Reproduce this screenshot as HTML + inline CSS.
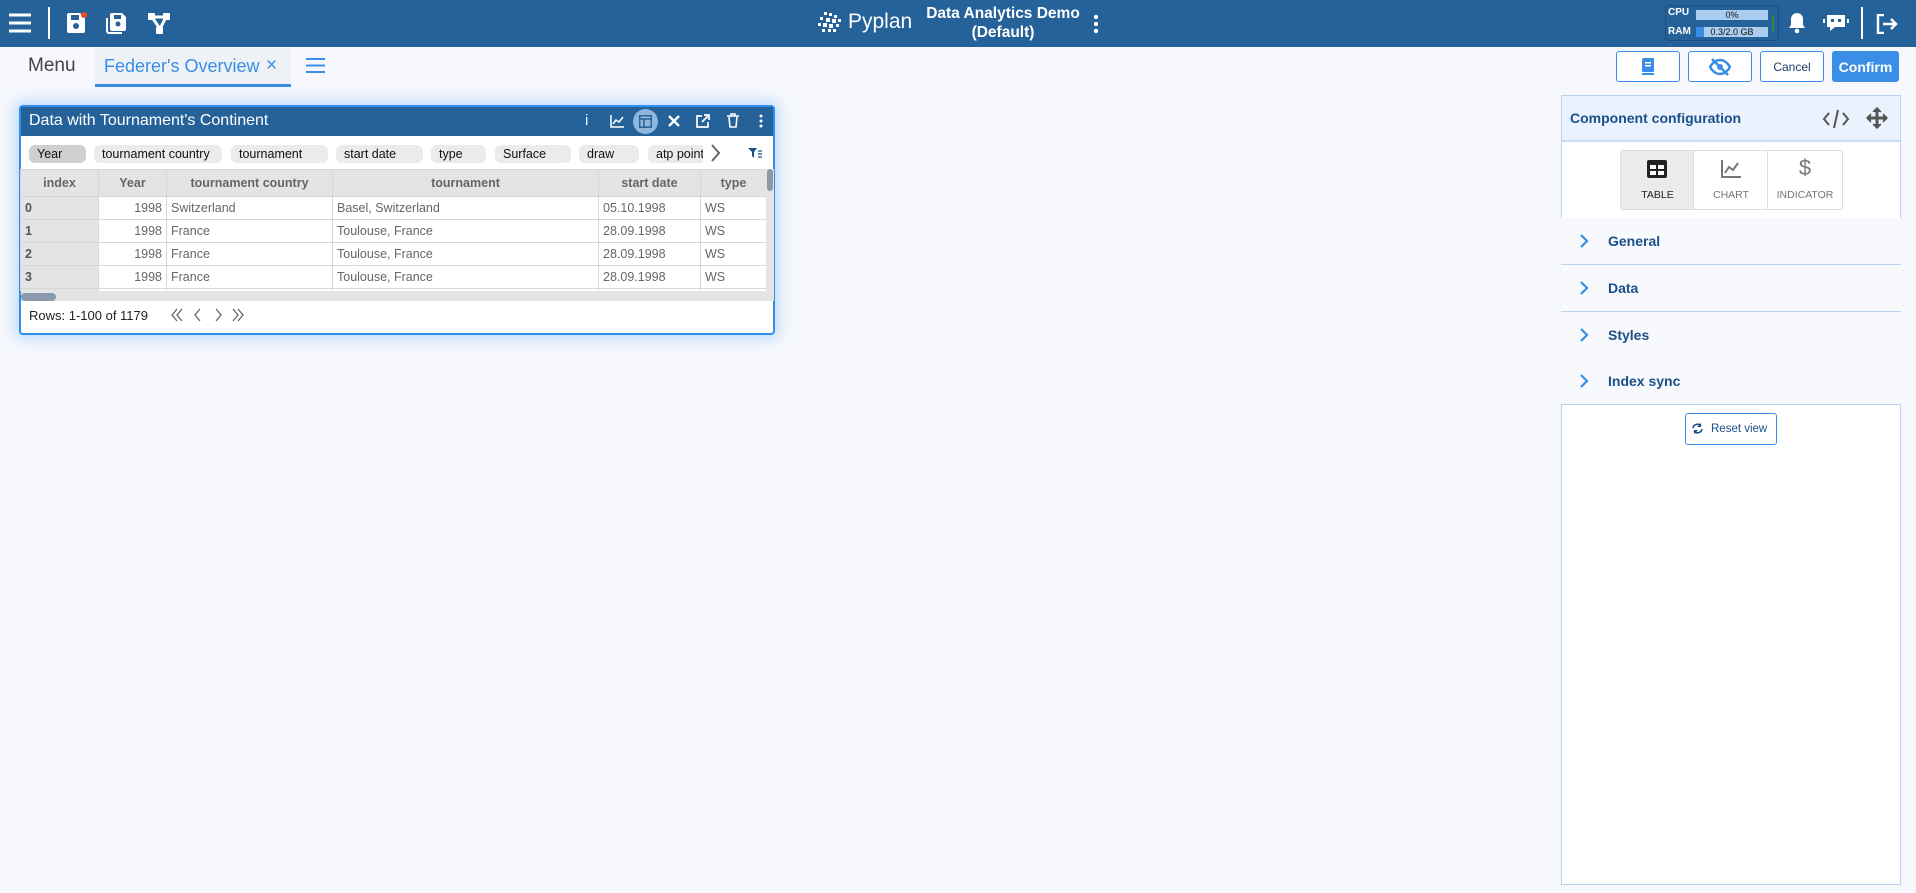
<!DOCTYPE html>
<html><head><meta charset="utf-8"><style>
*{box-sizing:border-box;margin:0;padding:0}
body{width:1916px;height:893px;background:#f6f8fd;font-family:"Liberation Sans",Arial,sans-serif;position:relative;overflow:hidden}
.abs{position:absolute}
.top{left:0;top:0;width:1916px;height:47px;background:#25629a}
.w{color:#fff}
.btn{position:absolute;top:51px;height:31px;border:1px solid #3a8ee6;border-radius:3px;background:#fff;display:flex;align-items:center;justify-content:center;font-size:12px;color:#1b3c66}
.chip{position:absolute;top:145px;height:18px;background:#ebebeb;border-radius:6px;font-size:12.5px;line-height:18px;padding-left:8px;color:#111;overflow:hidden;white-space:nowrap}
table{border-collapse:collapse;position:absolute;left:0;top:0;font-size:12.5px;table-layout:fixed}
td,th{border:1px solid #d6d6d6;height:23px;padding:0 4px;white-space:nowrap;overflow:hidden;color:#666;font-weight:normal}
th{background:#e4e4e4;height:27px;font-weight:bold;color:#666;text-align:center}
td.i{background:#e4e4e4;color:#555;font-weight:bold}
.row{position:absolute;left:1561px;width:340px;height:47px;border-bottom:1px solid #b9d3ee;font-size:14px;font-weight:bold;color:#1b4f8a}
.row span{position:absolute;left:47px;top:15px}
.row svg{position:absolute;left:18px;top:15px}
</style></head><body>
<div class="abs top"></div>
<svg class="abs" style="left:9px;top:13px" width="22" height="20"><g stroke="#fff" stroke-width="3"><line x1="0" y1="2" x2="22" y2="2"/><line x1="0" y1="10" x2="22" y2="10"/><line x1="0" y1="18" x2="22" y2="18"/></g></svg>
<div class="abs" style="left:48px;top:7px;width:2px;height:32px;background:#fff"></div>
<svg class="abs" style="left:66px;top:12px" width="22" height="22"><path d="M1 3a2 2 0 0 1 2-2h11l5 5v13a2 2 0 0 1-2 2H3a2 2 0 0 1-2-2z" fill="#fff"/><rect x="5" y="3" width="8" height="5" fill="#25629a"/><circle cx="10" cy="14" r="3" fill="#25629a"/><circle cx="18" cy="3" r="3" fill="#f04a2a"/></svg>
<svg class="abs" style="left:106px;top:12px" width="22" height="22"><path d="M4 3a2 2 0 0 1 2-2h10l4 4v12a2 2 0 0 1-2 2H6a2 2 0 0 1-2-2z" fill="#fff"/><path d="M1 6v13a2 2 0 0 0 2 2h13" stroke="#fff" stroke-width="2" fill="none"/><rect x="8" y="3" width="7" height="4" fill="#25629a"/><circle cx="12" cy="12" r="2.5" fill="#25629a"/></svg>
<svg class="abs" style="left:148px;top:13px" width="24" height="22"><g fill="#fff"><rect x="0" y="0" width="7" height="7" rx="1"/><rect x="15" y="0" width="7" height="7" rx="1"/><rect x="8" y="14" width="7" height="7" rx="1"/></g><path d="M4 4h14M4 4l8 12M18 4l-6 12" stroke="#fff" stroke-width="3" fill="none"/></svg>
<svg class="abs" style="left:818px;top:11px" width="26" height="22"><g fill="#fff"><rect x="6" y="1" width="3" height="3"/><rect x="11" y="2" width="3" height="3"/><rect x="16" y="4" width="3" height="3"/><rect x="2" y="6" width="3" height="3"/><rect x="8" y="7" width="4" height="4"/><rect x="14" y="8" width="4" height="4"/><rect x="20" y="8" width="3" height="3"/><rect x="0" y="12" width="3" height="3"/><rect x="5" y="12" width="4" height="4"/><rect x="11" y="13" width="4" height="4"/><rect x="18" y="13" width="3" height="3"/><rect x="4" y="18" width="3" height="3"/><rect x="10" y="18" width="3" height="3"/><rect x="15" y="18" width="3" height="3"/></g></svg>
<div class="abs w" style="left:848px;top:10px;font-size:21px">Pyplan</div>
<div class="abs w" style="left:920px;top:4px;width:166px;text-align:center;font-size:15.5px;font-weight:bold;line-height:19px">Data Analytics Demo<br>(Default)</div>
<svg class="abs" style="left:1093px;top:14px" width="6" height="20"><g fill="#fff"><circle cx="3" cy="3" r="2.2"/><circle cx="3" cy="10" r="2.2"/><circle cx="3" cy="17" r="2.2"/></g></svg>
<div class="abs" style="left:1665px;top:5px;width:114px;height:36px;border:1px solid #1d4f80;border-radius:4px"></div>
<div class="abs w" style="left:1668px;top:7px;font-size:10px;font-weight:bold">CPU</div>
<div class="abs w" style="left:1668px;top:26px;font-size:10px;font-weight:bold">RAM</div>
<div class="abs" style="left:1696px;top:10px;width:72px;height:10px;background:#a9cdf1;font-size:9px;text-align:center;line-height:10px;color:#111">0%</div>
<div class="abs" style="left:1696px;top:27px;width:72px;height:10px;background:#a9cdf1;font-size:9px;text-align:center;line-height:10px;color:#111"><div class="abs" style="left:0;top:0;width:8px;height:10px;background:#3a8ee6"></div><span style="position:relative">0.3/2.0 GB</span></div>
<div class="abs" style="left:1772px;top:15px;width:2px;height:16px;background:#2f8a3a"></div>
<svg class="abs" style="left:1788px;top:12px" width="18" height="22"><path d="M9 1a6 6 0 0 0-6 6v6l-2 3h16l-2-3V7a6 6 0 0 0-6-6z" fill="#fff"/><circle cx="9" cy="19" r="2.3" fill="#fff"/></svg>
<svg class="abs" style="left:1823px;top:11px" width="26" height="24"><path d="M4 4h18v12h-10l-5 4v-4H4z" fill="#fff"/><rect x="8" y="8" width="3" height="3" fill="#25629a"/><rect x="15" y="8" width="3" height="3" fill="#25629a"/><path d="M1 8v4M25 8v4" stroke="#fff" stroke-width="2"/></svg>
<div class="abs" style="left:1861px;top:7px;width:2px;height:32px;background:#fff"></div>
<svg class="abs" style="left:1876px;top:14px" width="22" height="20"><path d="M8 1H2v18h6" stroke="#fff" stroke-width="2.4" fill="none"/><path d="M7 10h13M15 5l5 5-5 5" stroke="#fff" stroke-width="2.4" fill="none"/></svg>

<div class="abs" style="left:28px;top:55px;font-size:19px;color:#444">Menu</div>
<div class="abs" style="left:95px;top:48px;width:196px;height:39px;background:#eef1f6;border-bottom:3px solid #3a8ee6"></div>
<div class="abs" style="left:104px;top:56px;font-size:18px;color:#3a8ee6">Federer's Overview</div>
<div class="abs" style="left:266px;top:55px;font-size:19px;color:#3a8ee6">×</div>
<svg class="abs" style="left:306px;top:57px" width="19" height="17"><g stroke="#3a8ee6" stroke-width="2"><line x1="0" y1="2" x2="19" y2="2"/><line x1="0" y1="8.5" x2="19" y2="8.5"/><line x1="0" y1="15" x2="19" y2="15"/></g></svg>

<div class="btn" style="left:1616px;width:64px"><svg width="14" height="18"><path d="M1 2a2 2 0 0 1 2-2h10v14H3" fill="#3a8ee6"/><rect x="1" y="2" width="12" height="12" fill="#3a8ee6"/><rect x="4" y="4" width="6" height="1.5" fill="#fff"/><rect x="4" y="7" width="6" height="1.5" fill="#fff"/><rect x="1" y="15" width="12" height="2" fill="#3a8ee6"/></svg></div>
<div class="btn" style="left:1688px;width:64px"><svg width="22" height="18"><path d="M1 9c3-5 6-7 10-7s7 2 10 7c-3 5-6 7-10 7S4 14 1 9z" stroke="#3a8ee6" stroke-width="2.5" fill="none"/><circle cx="11" cy="9" r="3" fill="#3a8ee6"/><line x1="3" y1="1" x2="19" y2="17" stroke="#3a8ee6" stroke-width="2.5"/></svg></div>
<div class="btn" style="left:1760px;width:64px">Cancel</div>
<div class="btn" style="left:1832px;width:67px;background:#3a8ee6;color:#fff;font-size:14px;font-weight:bold">Confirm</div>

<div class="abs" style="left:19px;top:105px;width:756px;height:230px;background:#fff;border:2px solid #2d8ff0;border-radius:4px;box-shadow:0 0 14px 4px rgba(90,160,240,.35)"></div>
<div class="abs" style="left:21px;top:107px;width:752px;height:29px;background:#25629a"></div>
<div class="abs w" style="left:29px;top:112px;font-size:16px">Data with Tournament's Continent</div>
<div class="abs w" style="left:585px;top:112px;font-size:15px">i</div>
<svg class="abs" style="left:610px;top:115px" width="14" height="13"><path d="M1 0v12h13M3 9l3-4 3 2 4-5" stroke="#fff" stroke-width="1.5" fill="none"/></svg>
<div class="abs" style="left:633px;top:109px;width:25px;height:25px;border-radius:50%;background:#8fb6dc"></div>
<svg class="abs" style="left:639px;top:115px" width="13" height="13"><rect x="0.7" y="0.7" width="11.5" height="11.5" stroke="#25629a" stroke-width="1.5" fill="none"/><path d="M1 4h11M5 4v8" stroke="#25629a" stroke-width="1.5"/></svg>
<svg class="abs" style="left:667px;top:114px" width="14" height="14"><path d="M2 2l10 10M12 2L2 12" stroke="#fff" stroke-width="2.4"/></svg>
<svg class="abs" style="left:696px;top:114px" width="14" height="14"><path d="M6 2H1v11h11V8M8 1h5v5M13 1L6 8" stroke="#fff" stroke-width="1.7" fill="none"/></svg>
<svg class="abs" style="left:727px;top:113px" width="12" height="15"><path d="M0 3h12M4 3V1h4v2M2 4l1 10h6l1-10" stroke="#fff" stroke-width="1.6" fill="none"/></svg>
<svg class="abs" style="left:759px;top:114px" width="4" height="14"><g fill="#fff"><circle cx="2" cy="2" r="1.5"/><circle cx="2" cy="7" r="1.5"/><circle cx="2" cy="12" r="1.5"/></g></svg>

<div class="chip" style="left:29px;width:57px;background:#cfcfcf">Year</div>
<div class="chip" style="left:94px;width:128px">tournament country</div>
<div class="chip" style="left:231px;width:97px">tournament</div>
<div class="chip" style="left:336px;width:87px">start date</div>
<div class="chip" style="left:431px;width:55px">type</div>
<div class="chip" style="left:495px;width:76px">Surface</div>
<div class="chip" style="left:579px;width:60px">draw</div>
<div class="chip" style="left:648px;width:55px;border-radius:6px 0 0 6px">atp points</div>
<svg class="abs" style="left:710px;top:144px" width="10" height="18"><path d="M2 1l7 8-7 8" stroke="#666" stroke-width="2" fill="none"/></svg>
<svg class="abs" style="left:748px;top:148px" width="14" height="11"><path d="M0 0h9L6 4v6L4 8V4z" fill="#1b4f8a"/><path d="M10 3h4M10 6h4M10 9h4" stroke="#1b4f8a" stroke-width="1.3"/></svg>

<div class="abs" style="left:20px;top:169px;width:746px;height:122px;overflow:hidden">
<table style="width:746px">
<colgroup><col style="width:78px"><col style="width:68px"><col style="width:166px"><col style="width:266px"><col style="width:102px"><col style="width:66px"></colgroup>
<tr><th>index</th><th>Year</th><th>tournament country</th><th>tournament</th><th>start date</th><th>type</th></tr>
<tr><td class="i">0</td><td style="text-align:right">1998</td><td>Switzerland</td><td>Basel, Switzerland</td><td>05.10.1998</td><td>WS</td></tr>
<tr><td class="i">1</td><td style="text-align:right">1998</td><td>France</td><td>Toulouse, France</td><td>28.09.1998</td><td>WS</td></tr>
<tr><td class="i">2</td><td style="text-align:right">1998</td><td>France</td><td>Toulouse, France</td><td>28.09.1998</td><td>WS</td></tr>
<tr><td class="i">3</td><td style="text-align:right">1998</td><td>France</td><td>Toulouse, France</td><td>28.09.1998</td><td>WS</td></tr>
<tr><td class="i"></td><td></td><td></td><td></td><td></td><td></td></tr>
</table></div>
<div class="abs" style="left:21px;top:291px;width:745px;height:10px;background:#e4e4e4"></div>
<div class="abs" style="left:21px;top:293px;width:35px;height:8px;background:#8a9aaa;border-radius:4px"></div>
<div class="abs" style="left:766px;top:169px;width:8px;height:132px;background:#e4e4e4"></div>
<div class="abs" style="left:767px;top:169px;width:6px;height:22px;background:#8a9aaa;border-radius:3px"></div>
<div class="abs" style="left:29px;top:308px;font-size:13px;color:#222">Rows: 1-100 of 1179</div>
<svg class="abs" style="left:171px;top:308px" width="78" height="14"><g stroke="#666" stroke-width="1.3" fill="none"><path d="M6 1L1 7l5 6M11 1L6 7l5 6M29 1l-5 6 5 6M45 1l5 6-5 6M62 1l5 6-5 6M67 1l5 6-5 6"/></g></svg>

<div class="abs" style="left:1561px;top:95px;width:340px;height:790px;background:#fff;border:1px solid #b9d3ee"></div>
<div class="abs" style="left:1562px;top:96px;width:338px;height:46px;background:#eaf2fd;border-bottom:2px solid #c9ddf3"></div>
<div class="abs" style="left:1570px;top:110px;font-size:14px;font-weight:bold;color:#1b4f8a">Component configuration</div>
<svg class="abs" style="left:1822px;top:108px" width="28" height="22"><path d="M7 5l-5 6 5 6M21 5l5 6-5 6M16 2l-4 18" stroke="#555" stroke-width="2" fill="none"/></svg>
<svg class="abs" style="left:1866px;top:107px" width="22" height="22"><path d="M11 1v20M1 11h20" stroke="#555" stroke-width="3"/><path d="M7 5l4-4 4 4M7 17l4 4 4-4M5 7l-4 4 4 4M17 7l4 4-4 4" fill="#555" stroke="#555" stroke-width="1.5"/></svg>
<div class="abs" style="left:1620px;top:150px;width:223px;height:60px;border:1px solid #ddd;border-radius:3px"></div>
<div class="abs" style="left:1621px;top:151px;width:73px;height:58px;background:#ebebeb;border-right:1px solid #ddd"></div>
<div class="abs" style="left:1694px;top:151px;width:74px;height:58px;border-right:1px solid #ddd"></div>
<svg class="abs" style="left:1647px;top:160px" width="20" height="18"><rect x="0" y="0" width="20" height="18" rx="2" fill="#222"/><rect x="3" y="5" width="6" height="4" fill="#fff"/><rect x="11" y="5" width="6" height="4" fill="#fff"/><rect x="3" y="11" width="6" height="4" fill="#fff"/><rect x="11" y="11" width="6" height="4" fill="#fff"/></svg>
<div class="abs" style="left:1621px;top:189px;width:73px;text-align:center;font-size:10.5px;color:#222">TABLE</div>
<svg class="abs" style="left:1721px;top:160px" width="20" height="18"><path d="M1 0v17h19M4 13l4-6 4 3 5-7" stroke="#777" stroke-width="2" fill="none"/></svg>
<div class="abs" style="left:1694px;top:189px;width:74px;text-align:center;font-size:10.5px;color:#777">CHART</div>
<div class="abs" style="left:1768px;top:155px;width:74px;text-align:center;font-size:22px;color:#777">$</div>
<div class="abs" style="left:1768px;top:189px;width:74px;text-align:center;font-size:10.5px;color:#777">INDICATOR</div>
<div class="abs" style="left:1562px;top:218px;width:338px;height:1px;background:#b9d3ee"></div>
<div class="row" style="top:218px;background:#f7f9fd"><svg width="10" height="16"><path d="M2 2l6 6-6 6" stroke="#3a8ee6" stroke-width="2.2" fill="none"/></svg><span>General</span></div>
<div class="row" style="top:265px;background:#f7f9fd"><svg width="10" height="16"><path d="M2 2l6 6-6 6" stroke="#3a8ee6" stroke-width="2.2" fill="none"/></svg><span>Data</span></div>
<div class="row" style="top:312px;background:#f7f9fd"><svg width="10" height="16"><path d="M2 2l6 6-6 6" stroke="#3a8ee6" stroke-width="2.2" fill="none"/></svg><span>Styles</span></div>
<div class="row" style="top:358px;background:#f7f9fd"><svg width="10" height="16"><path d="M2 2l6 6-6 6" stroke="#3a8ee6" stroke-width="2.2" fill="none"/></svg><span>Index sync</span></div>
<div class="abs" style="left:1685px;top:413px;width:92px;height:32px;border:1px solid #3a8ee6;border-radius:3px;background:#fff;font-size:11.5px;color:#1b4f8a;line-height:30px;padding-left:25px">Reset view</div>
<svg class="abs" style="left:1692px;top:423px" width="11" height="11"><path d="M1 5a4.5 4.5 0 0 1 8-2M10 6a4.5 4.5 0 0 1-8 2" stroke="#1b4f8a" stroke-width="1.6" fill="none"/><path d="M9 0v4H5M2 11V7h4" fill="#1b4f8a"/></svg>
</body></html>
